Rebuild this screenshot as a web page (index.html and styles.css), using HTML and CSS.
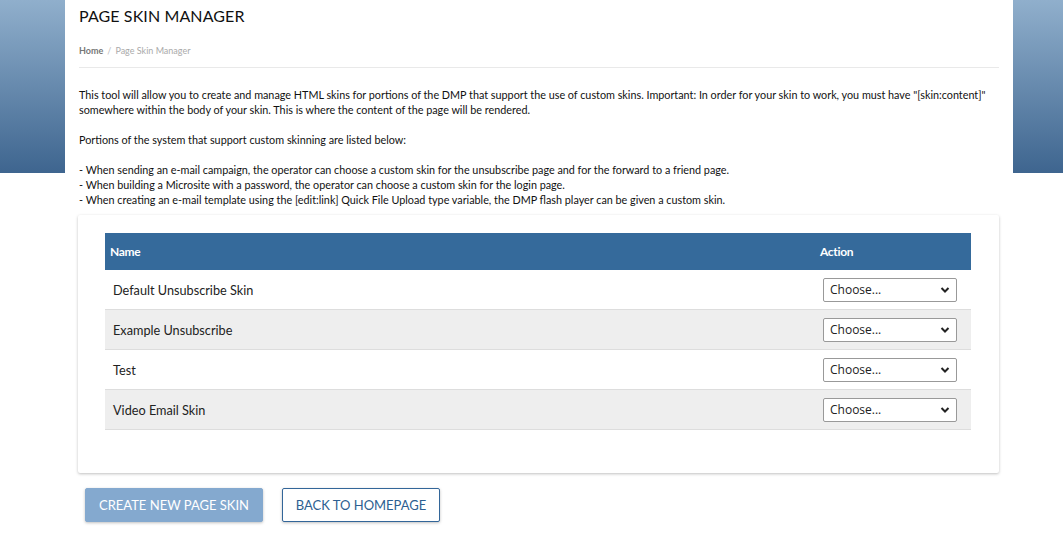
FILE: index.html
```html
<!DOCTYPE html>
<html>
<head>
<meta charset="utf-8">
<link rel="stylesheet" href="styles.css">
</head>
<body>
<div class="page">
  <main class="main">
    <h1 class="title">PAGE SKIN MANAGER</h1>
    <nav class="crumbs"><span class="home">Home</span><span class="sep">/</span><span class="current">Page Skin Manager</span></nav>
    <div class="intro">
      This tool will allow you to create and manage HTML skins for portions of the DMP that support the use of custom skins. Important: In order for your skin to work, you must have "[skin:content]" somewhere within the body of your skin. This is where the content of the page will be rendered.<br><br>
      Portions of the system that support custom skinning are listed below:<br><br>
      - When sending an e-mail campaign, the operator can choose a custom skin for the unsubscribe page and for the forward to a friend page.<br>
      - When building a Microsite with a password, the operator can choose a custom skin for the login page.<br>
      - When creating an e-mail template using the [edit:link] Quick File Upload type variable, the DMP flash player can be given a custom skin.
    </div>
    <section class="card">
      <table class="grid">
        <thead>
          <tr><th class="c-name">Name</th><th class="c-action">Action</th></tr>
        </thead>
        <tbody>
          <tr><td>Default Unsubscribe Skin</td><td><select class="choose"><option>Choose...</option></select></td></tr>
          <tr class="alt"><td>Example Unsubscribe</td><td><select class="choose"><option>Choose...</option></select></td></tr>
          <tr><td>Test</td><td><select class="choose"><option>Choose...</option></select></td></tr>
          <tr class="alt"><td>Video Email Skin</td><td><select class="choose"><option>Choose...</option></select></td></tr>
        </tbody>
      </table>
    </section>
    <div class="actions">
      <button class="btn btn-primary">CREATE NEW PAGE SKIN</button>
      <button class="btn btn-outline">BACK TO HOMEPAGE</button>
    </div>
  </main>
</div>
</body>
</html>
```

FILE: styles.css
```css
html, body {
  margin: 0;
  padding: 0;
  background: #fff;
}
body {
  font-family: Lato, "Open Sans", Arial, sans-serif;
  color: #222;
}
.page {
  width: 1063px;
  height: 541px;
  overflow: hidden;
  background: linear-gradient(to bottom, #90afcc 0%, #3e658f 100%) no-repeat;
  background-size: 100% 173px;
  display: flex;
}
.main {
  width: 948px;
  box-sizing: border-box;
  background: #fff;
  padding: 0 14px;
  margin-left: 65px;
}
.title {
  margin: 0;
  padding-top: 7px;
  font-size: 16px;
  line-height: 18px;
  font-weight: 400;
  color: #111;
  letter-spacing: 0.1px;
}
.crumbs {
  margin-top: 20px;
  font-size: 9px;
  line-height: 12px;
  padding-bottom: 10px;
  border-bottom: 1px solid #e9e9e9;
}
.crumbs .home { color: #777; font-weight: 700; }
.crumbs .sep { color: #bbb; margin: 0 4px; }
.crumbs .current { color: #aaa; }
.intro {
  margin-top: 19px;
  font-size: 10.8px;
  line-height: 15px;
  color: #111;
}
.card {
  margin: 8px 0 0 -1px;
  background: #fff;
  box-shadow: 0 1px 3px rgba(0,0,0,0.25);
  border-radius: 2px;
  padding: 18px 28px 43px 27px;
}
.grid {
  width: 100%;
  border-collapse: collapse;
  font-size: 12.7px;
}
.grid th {
  background: #356a9b;
  color: #fff;
  font-weight: 700;
  font-size: 12px;
  text-align: left;
  height: 37px;
  padding: 0 5px;
  letter-spacing: -0.3px;
}
.grid th.c-action { width: 146px; }
.grid td {
  height: 39px;
  padding: 0 8px;
  border-bottom: 1px solid #ddd;
  color: #222;
}
.grid tr.alt td { background: #eee; }
.choose {
  width: 134px;
  height: 24px;
  font-family: "Open Sans", Arial, sans-serif;
  font-size: 12px;
  color: #222;
  border: 1px solid #999;
  border-radius: 2px;
  background: #fff url("data:image/svg+xml;utf8,<svg xmlns='http://www.w3.org/2000/svg' width='10' height='8' viewBox='0 0 10 8'><path d='M1.5 2 L5 5.5 L8.5 2' fill='none' stroke='%23222' stroke-width='2'/></svg>") no-repeat right 6px center;
  appearance: none;
  -webkit-appearance: none;
  padding: 0 6px;
  display: block;
}
.actions {
  display: flex;
  gap: 19px;
  margin: 15px 0 0 6px;
}
.btn {
  height: 34px;
  font-family: Lato, Arial, sans-serif;
  font-size: 13px;
  padding: 0;
  white-space: nowrap;
  border-radius: 2px;
  box-shadow: 0 1px 3px rgba(0,0,0,0.25);
  cursor: pointer;
}
.btn-primary {
  width: 178px;
  background: #84a9cf;
  color: #fff;
  border: 1px solid #84a9cf;
}
.btn-outline {
  width: 158px;
  background: #fff;
  color: #2d5f91;
  border: 1px solid #336699;
}
```
